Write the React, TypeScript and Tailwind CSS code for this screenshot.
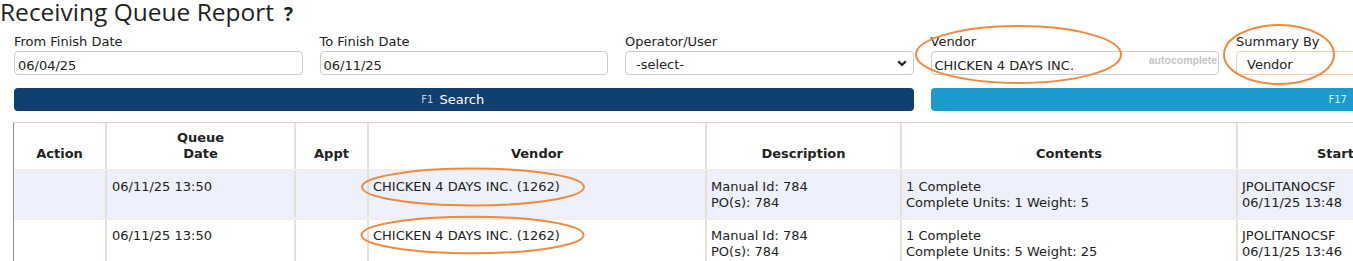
import React from "react";

const cols = "grid grid-cols-[91px_189px_73px_338px_195px_336px_220px]";
const cellBorder = "border-l-2 border-[#e8e0d4]";

const rows = [
  {
    date: "06/11/25 13:50",
    vendor: "CHICKEN 4 DAYS INC. (1262)",
    desc: ["Manual Id: 784", "PO(s): 784"],
    contents: ["1 Complete", "Complete Units: 1 Weight: 5"],
    start: ["JPOLITANOCSF", "06/11/25 13:48"],
  },
  {
    date: "06/11/25 13:50",
    vendor: "CHICKEN 4 DAYS INC. (1262)",
    desc: ["Manual Id: 784", "PO(s): 784"],
    contents: ["1 Complete", "Complete Units: 5 Weight: 25"],
    start: ["JPOLITANOCSF", "06/11/25 13:46"],
  },
];

const Field = ({ label, children }: { label: string; children: React.ReactNode }) => (
  <div className="flex flex-col gap-[1px]">
    <label className="pt-[1px] leading-[16px]">{label}</label>
    {children}
  </div>
);

const App = () => {
  return (
    <div className="relative w-[1353px] h-[261px] overflow-hidden bg-white text-[13px] text-[#222] font-['DejaVu_Sans',Verdana,sans-serif]">
      {/* Title */}
      <h1 className="h-[33px] leading-[24px] text-[24.5px] text-[#1f1f1f] font-['Open_Sans',sans-serif] whitespace-nowrap">
        Receiving Queue Report
        <span className="ml-[10px] text-[19px] font-bold">?</span>
      </h1>

      {/* Filters */}
      <div className="grid grid-cols-[288.5px_288.5px_288.5px_288.5px_288.5px] gap-x-[17px] pl-[14px]">
        <Field label="From Finish Date">
          <input
            defaultValue="06/04/25"
            className="h-[24px] rounded-[4px] border border-[#cccccc] px-[3px] pt-[4px] outline-none"
          />
        </Field>
        <Field label="To Finish Date">
          <input
            defaultValue="06/11/25"
            className="h-[24px] rounded-[4px] border border-[#cccccc] px-[3px] pt-[4px] outline-none"
          />
        </Field>
        <Field label="Operator/User">
          <div className="relative">
            <select className="w-full h-[24px] appearance-none rounded-[4px] border border-[#cccccc] bg-white pl-[10px] pt-[3px] outline-none">
              <option>-select-</option>
            </select>
            <svg
              className="absolute right-[7px] top-[9px] pointer-events-none"
              width="10"
              height="7"
              viewBox="0 0 10 7"
            >
              <path d="M1.2 1.2 L5 5 L8.8 1.2" fill="none" stroke="#222" strokeWidth="2.2" />
            </svg>
          </div>
        </Field>
        <Field label="Vendor">
          <div className="relative">
            <input
              defaultValue="CHICKEN 4 DAYS INC."
              className="w-full h-[24px] rounded-[4px] border border-[#cccccc] px-[3px] pt-[4px] outline-none"
            />
            <span className="absolute right-[2px] top-[3px] text-[10.5px] leading-[12px] font-bold text-[#c4c4c4] font-['Liberation_Sans',Arial,sans-serif]">
              autocomplete
            </span>
          </div>
        </Field>
        <Field label="Summary By">
          <select className="w-full h-[24px] appearance-none rounded-[4px] border border-[#f6cfaa] bg-white pl-[10px] pt-[3px] outline-none">
            <option>Vendor</option>
          </select>
        </Field>
      </div>

      {/* Buttons */}
      <div className="grid grid-cols-[899.5px_899.5px] gap-x-[17px] pl-[14px] mt-[13px]">
        <button className="h-[23px] rounded-[4px] bg-[#11406f] text-white flex items-center justify-center pr-[22px]">
          <span className="text-[10px] text-[#c3d0de] mr-[6px]">F1</span>
          <span>Search</span>
        </button>
        <button className="h-[23px] rounded-[4px] bg-[#1a9bcb] text-white flex items-center pl-[398px]">
          <span className="text-[10px] text-[#dbeef7]">F17</span>
        </button>
      </div>

      {/* Table */}
      <div className="ml-[13px] mt-[11px] border-t border-l border-t-[#d2d2d2] border-l-[#8f8f8f] w-[1500px]">
        <div className={`${cols} h-[48px] font-bold text-center border-b-2 border-[#f2eee8]`}>
          <div className="h-full flex items-end justify-center pb-[7px] leading-[16px]">Action</div>
          <div className={`${cellBorder} h-full flex items-end justify-center pb-[7px] leading-[16px]`}>
            Queue
            <br />
            Date
          </div>
          <div className={`${cellBorder} h-full flex items-end justify-center pb-[7px] leading-[16px]`}>Appt</div>
          <div className={`${cellBorder} h-full flex items-end justify-center pb-[7px] leading-[16px]`}>Vendor</div>
          <div className={`${cellBorder} h-full flex items-end justify-center pb-[7px] leading-[16px]`}>Description</div>
          <div className={`${cellBorder} h-full flex items-end justify-center pb-[7px] leading-[16px]`}>Contents</div>
          <div className={`${cellBorder} h-full flex items-end pl-[79px] pb-[7px] leading-[16px]`}>Start</div>
        </div>
        {rows.map((r, i) => (
          <div
            key={i}
            className={`${cols} leading-[16px] border-b-2 border-[#f2eee8] ${i % 2 === 0 ? "bg-[#eef0fb]" : "bg-white"}`}
          >
            <div className="pt-[8px] pb-[7px]"></div>
            <div className={`${cellBorder} pt-[8px] pb-[7px] pl-[5px]`}>{r.date}</div>
            <div className={`${cellBorder} pt-[8px] pb-[7px]`}></div>
            <div className={`${cellBorder} pt-[8px] pb-[7px] pl-[4px]`}>{r.vendor}</div>
            <div className={`${cellBorder} pt-[8px] pb-[7px] pl-[4px]`}>
              {r.desc[0]}
              <br />
              {r.desc[1]}
            </div>
            <div className={`${cellBorder} pt-[8px] pb-[7px] pl-[4px]`}>
              {r.contents[0]}
              <br />
              {r.contents[1]}
            </div>
            <div className={`${cellBorder} pt-[8px] pb-[7px] pl-[4px]`}>
              {r.start[0]}
              <br />
              {r.start[1]}
            </div>
          </div>
        ))}
      </div>

      {/* Annotation marks */}
      <svg
        className="absolute left-0 top-0 pointer-events-none"
        width="1353"
        height="261"
        viewBox="0 0 1353 261"
      >
        <g fill="none" stroke="#f08a3c" strokeWidth="2">
          <ellipse cx="1018.5" cy="54.5" rx="102.5" ry="28.5" />
          <ellipse cx="1279" cy="54.5" rx="55" ry="29.5" />
          <ellipse cx="473" cy="187" rx="111" ry="18.5" />
          <ellipse cx="472.5" cy="235" rx="111" ry="18.3" />
        </g>
      </svg>
    </div>
  );
};

export default App;
